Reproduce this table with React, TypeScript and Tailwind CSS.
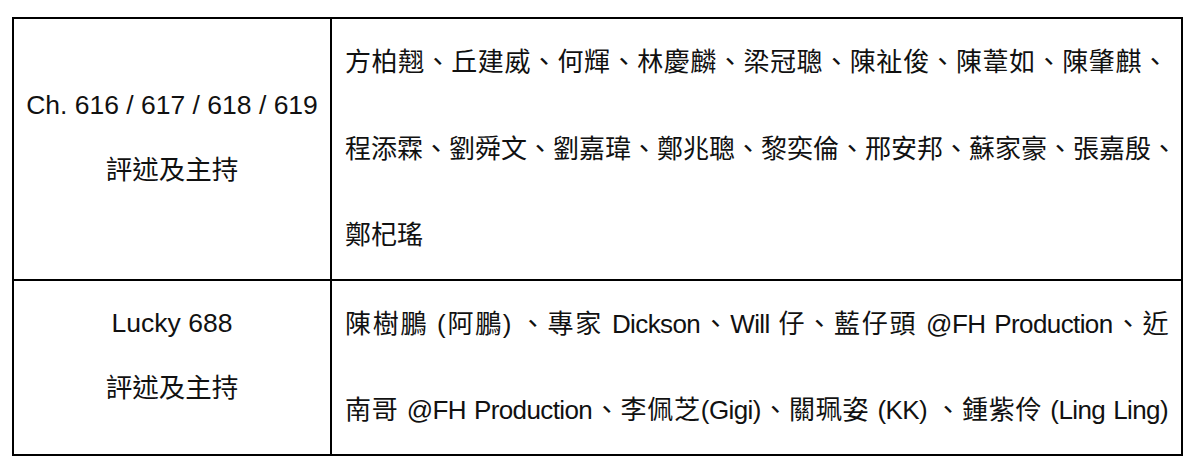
const font = "font-['Liberation_Sans','Noto_Sans_CJK_TC',sans-serif]";

const rows = [
	{
		title: "Ch. 616 / 617 / 618 / 619",
		lines: [
			"方柏翹、丘建威、何輝、林慶麟、梁冠聰、陳祉俊、陳葦如、陳肇麒、",
			"程添霖、劉舜文、劉嘉瑋、鄭兆聰、黎奕倫、邢安邦、蘇家豪、張嘉殷、",
		],
		last: "鄭杞瑤",
		tight: false,
	},
	{
		title: "Lucky 688",
		lines: [
			"陳樹鵬 (阿鵬) 、專家 Dickson、Will 仔、藍仔頭 @FH Production、近",
			"南哥 @FH Production、李佩芝(Gigi)、關珮姿 (KK) 、鍾紫伶 (Ling Ling)",
		],
		last: "",
		tight: true,
	},
];

const App = () => {
	return (
		<div className={`bg-white w-[1200px] h-[469px] pt-[17px] pl-[12px] ${font} text-[26.5px] text-[#111]`}>
			<div className="w-[1171px] border-2 border-black grid grid-cols-[318px_minmax(0,1fr)]">
				{rows.map((row, i) => (
					<div key={i} className="contents">
						<div
							className={`border-r-2 border-black flex flex-col items-center justify-center pb-[22px] ${
								i === 0 ? "border-b-2" : ""
							}`}
						>
							<div className="leading-[65px] whitespace-nowrap">{row.title}</div>
							<div className="leading-[65px]">評述及主持</div>
						</div>
						<div className={`pl-[13px] pr-[13px] text-[26px] border-black ${i === 0 ? "border-b-2" : ""}`}>
							{row.lines.map((line, j) => (
								<div
									key={j}
									className={`leading-[86.5px] whitespace-nowrap text-justify [text-align-last:justify] ${
										row.tight ? "tracking-[-0.6px]" : ""
									}`}
								>
									{line}
								</div>
							))}
							{row.last && <div className="leading-[86.5px]">{row.last}</div>}
						</div>
					</div>
				))}
			</div>
		</div>
	);
};

export default App;
